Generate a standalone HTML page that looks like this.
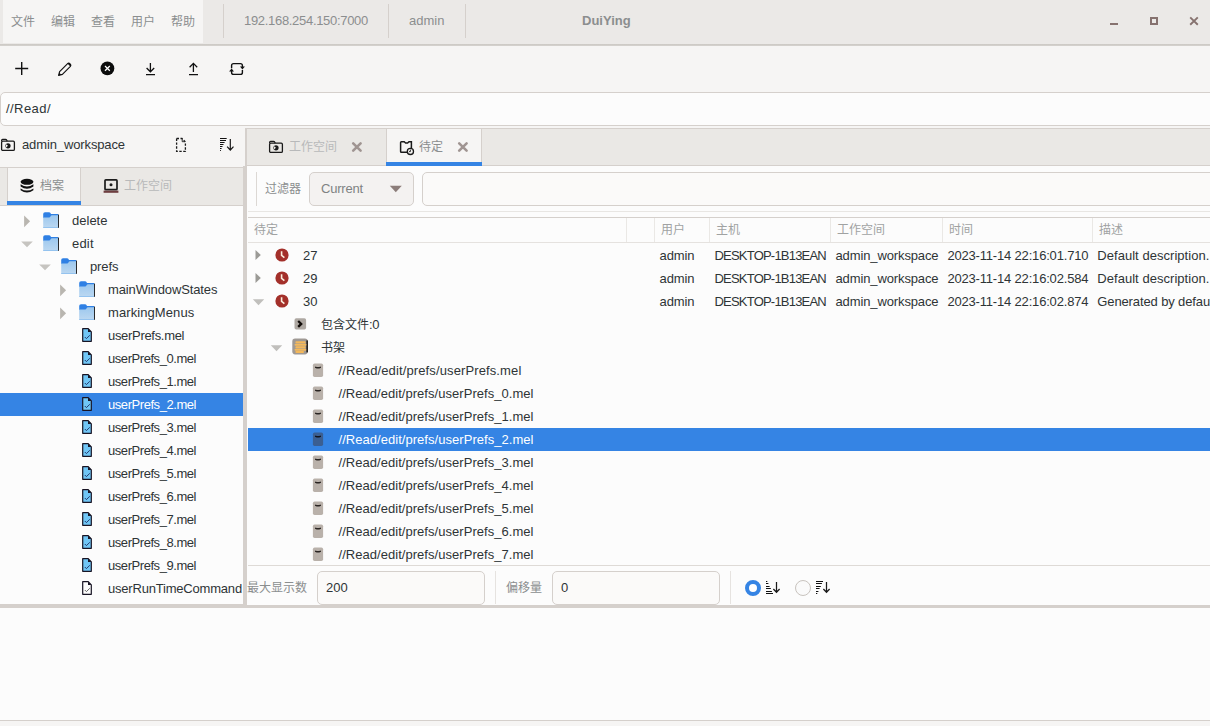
<!DOCTYPE html>
<html lang="zh">
<head>
<meta charset="utf-8">
<title>DuiYing</title>
<style>
*{box-sizing:border-box;margin:0;padding:0}
html,body{width:1210px;height:726px;overflow:hidden;background:#f6f5f4}
body{position:relative;font-family:"Liberation Sans","Noto Sans CJK SC",sans-serif;font-size:13px;color:#2e3436}
.a{position:absolute}
.t{position:absolute;white-space:nowrap;line-height:16px;height:16px}
.cj{font-size:12px}
.g{color:#8b8e8f}
.lg{color:#b8b9ba}
.hd{color:#a0a2a2}
.cj2{font-size:12px}
/* header */
#hdr{left:0;top:0;width:1210px;height:44px;background:#ebe9e7}
#hdrb{left:0;top:44px;width:1210px;height:2px;background:linear-gradient(#cbc8c3,#d6d3cf)}
#menubar{left:3px;top:0;width:200px;height:43px;background:#f6f5f4}
.vsep{width:1px;background:#d5d0cc}
/* toolbar */
#pathbar{left:0;top:92px;width:1225px;height:34px;background:#fcfcfc;border:1px solid #d5d0cc;border-radius:5px}
/* left */
#ltabs{left:0;top:167px;width:244px;height:39px;background:#eae8e5;border-top:1px solid #d5d0cc;border-bottom:1px solid #d5d0cc}
#ltab1{left:7px;top:168px;width:74px;height:37px;background:#f6f5f4;border-left:1px solid #d5d0cc;border-right:1px solid #d5d0cc}
#ltree{left:0;top:206px;width:243px;height:398px;background:#fcfcfc;overflow:hidden}
.row{position:absolute;left:0;height:23px;width:100%}
.sel{background:#3584e4;color:#fff}
#vsplit{left:243px;top:166px;width:4px;height:439px;background:#d5d0cc}
#vsplit2{left:245px;top:128px;width:2px;height:38px;background:#d5d0cc}
/* right */
#rtabs{left:247px;top:128px;width:963px;height:38px;background:#eae8e5;border-top:1px solid #d5d0cc;border-bottom:1px solid #d5d0cc}
#rtab2{left:386px;top:129px;width:96px;height:36px;background:#f6f5f4;border-left:1px solid #d5d0cc;border-right:1px solid #d5d0cc}
#rtable{left:248px;top:217px;width:962px;height:349px;background:#fcfcfc;border-top:1px solid #d5d0cc;overflow:hidden}
#hsplit{left:0;top:605px;width:1210px;height:3px;background:#d5d0cc}
#bottom{left:0;top:608px;width:1210px;height:112px;background:#fcfcfc}
#bstrip{left:0;top:720px;width:1210px;height:6px;background:#f6f5f4;border-top:1px solid #d5d0cc}
.entry{background:#fbfaf9;border:1px solid #d5d0cc;border-radius:5px}
</style>
</head>
<body>
<!-- HEADER -->
<div class="a" id="hdr"></div>
<div class="a" id="hdrb"></div>
<div class="a" id="menubar"></div>
<span class="t cj g" style="left:11px;top:14px">文件</span>
<span class="t cj g" style="left:51px;top:14px">编辑</span>
<span class="t cj g" style="left:91px;top:14px">查看</span>
<span class="t cj g" style="left:131px;top:14px">用户</span>
<span class="t cj g" style="left:171px;top:14px">帮助</span>
<div class="a vsep" style="left:223px;top:4px;height:34px"></div>
<span class="t g" id="ip" style="left:244px;top:13px;letter-spacing:-0.31px">192.168.254.150:7000</span>
<div class="a vsep" style="left:388px;top:4px;height:34px"></div>
<span class="t g" id="adm" style="left:409px;top:13px">admin</span>
<div class="a vsep" style="left:465px;top:4px;height:34px"></div>
<span class="t g" id="title" style="left:582px;top:13px;font-weight:bold">DuiYing</span>

<div class="a" style="left:1110px;top:22.5px;width:8px;height:2.6px;background:#86726f"></div>
<div class="a" style="left:1150px;top:17px;width:8px;height:8px;border:2px solid #86726f"></div>
<svg class="a" style="left:1189px;top:16px" width="10" height="10" viewBox="0 0 10 10"><path d="M1.2 1.4 L8.8 8.8 M8.8 1.4 L1.2 8.8" stroke="#86726f" stroke-width="1.9" fill="none"/></svg>

<!-- TOOLBAR -->
<svg class="a" style="left:14px;top:61px" width="16" height="16" viewBox="0 0 16 16"><path d="M7.7 1 V14 M1.2 7.5 H14.2" stroke="#111" stroke-width="1.4" fill="none"/></svg>
<svg class="a" style="left:57px;top:61px" width="16" height="16" viewBox="0 0 16 16"><path d="M1.6 14.4 L2.6 10.6 L10.6 2.6 Q11.6 1.7 12.7 2.7 L13.3 3.3 Q14.3 4.4 13.4 5.4 L5.4 13.4 Z" fill="none" stroke="#111" stroke-width="1.15" stroke-linejoin="round"/><path d="M10.4 2.6 L13.4 5.6 L14.3 3.7 L12.3 1.7 Z" fill="#111"/><path d="M1.4 14.6 L2.3 11.8 L4.2 13.7 Z" fill="#111"/></svg>
<svg class="a" style="left:100px;top:61px" width="15" height="15" viewBox="0 0 15 15"><circle cx="7.4" cy="7.4" r="6.9" fill="#0c0c0c"/><path d="M5 5 L9.8 9.8 M9.8 5 L5 9.8" stroke="#fff" stroke-width="1.25" fill="none"/></svg>
<svg class="a" style="left:143px;top:61px" width="16" height="16" viewBox="0 0 16 16"><path d="M7.4 2 V10.6 M3.6 7 L7.4 10.8 L11.2 7 M3 13.6 H12" stroke="#111" stroke-width="1.3" fill="none"/></svg>
<svg class="a" style="left:186px;top:61px" width="16" height="16" viewBox="0 0 16 16"><path d="M7.4 11 V2.6 M3.6 6.2 L7.4 2.4 L11.2 6.2 M3 13.6 H12" stroke="#111" stroke-width="1.3" fill="none"/></svg>
<svg class="a" style="left:228px;top:61px" width="18" height="16" viewBox="0 0 18 16"><path d="M3.6 7.2 V4.6 Q3.6 2.6 5.6 2.6 H12.4 Q14.4 2.6 14.4 4.6 V6 M14.4 9 V11.4 Q14.4 13.4 12.4 13.4 H5.6 Q3.6 13.4 3.6 11.4 V10" stroke="#111" stroke-width="1.4" fill="none"/><path d="M12 5.6 H16.9 L14.4 8.4 Z" fill="#111"/><path d="M1.1 10.4 H6 L3.6 7.6 Z" fill="#111"/></svg>
<div class="a" id="pathbar"></div>
<span class="t" id="path" style="left:6px;top:101px;letter-spacing:0.44px">//Read/</span>

<!-- LEFT PANEL -->
<svg class="a" style="left:0px;top:138px" width="16" height="14" viewBox="0 0 16 14"><path d="M1.6 3.2 V2.4 Q1.6 1.4 2.6 1.4 H5.6 Q6.4 1.4 6.8 2.2 L7.2 3.2" fill="none" stroke="#1a1a1a" stroke-width="1.2"/><rect x="1.6" y="3.2" width="12.8" height="9.2" rx="1.2" fill="none" stroke="#1a1a1a" stroke-width="1.3"/><circle cx="8" cy="7.8" r="2.6" fill="#1a1a1a"/><path d="M8 7.8 L6 6.2 V9.4 Z" fill="#f6f5f4"/></svg>
<svg class="a" style="left:175px;top:137px" width="12" height="16" viewBox="0 0 12 16"><path d="M1.6 1.5 H7 L10.4 4.9 V14.4 H1.6 Z" fill="none" stroke="#1a1a1a" stroke-width="1.3" stroke-dasharray="2.4 1.5"/><path d="M7.2 2 V4.7 H10" fill="none" stroke="#1a1a1a" stroke-width="0.9"/></svg>
<svg class="a" style="left:219px;top:137px" width="16" height="15" viewBox="0 0 16 15"><path d="M1 1.5 H7.7 M1 3.5 H7 M1 5.5 H5.6 M1 7.5 H4.5 M1 9.5 H3.5 M1 11.5 H2.6 M1 13.5 H1.9" stroke="#111" stroke-width="1" fill="none"/><path d="M11.3 2 V13 M8.1 9.6 L11.3 13 L14.5 9.6" stroke="#1a1a1a" stroke-width="1.2" fill="none"/></svg>
<span class="t" id="ws" style="left:22px;top:137px;letter-spacing:-0.12px">admin_workspace</span>
<div class="a" id="ltabs"></div>
<div class="a" id="ltab1"></div>
<div class="a" style="left:7px;top:201px;width:74px;height:4px;background:#3584e4"></div>
<svg class="a" style="left:20px;top:178px" width="14" height="16" viewBox="0 0 14 16"><ellipse cx="7" cy="3.8" rx="6.4" ry="3" fill="#111"/><path d="M0.6 6.2 Q7 10.6 13.4 6.2 V8.6 Q7 13 0.6 8.6 Z" fill="#111"/><path d="M0.6 10.4 Q7 14.8 13.4 10.4 V12.2 Q7 17 0.6 12.2 Z" fill="#111"/></svg>
<svg class="a" style="left:103px;top:178px" width="16" height="16" viewBox="0 0 16 16"><rect x="2" y="1.9" width="12" height="9.8" rx="0.8" fill="none" stroke="#1c1c1c" stroke-width="1.7"/><circle cx="8" cy="6.8" r="1.5" fill="#1c1c1c"/><rect x="0.6" y="12.6" width="14.8" height="2.2" fill="#6e3e40"/></svg>
<span class="t cj g" style="left:40px;top:178px">档案</span>
<span class="t cj lg" style="left:124px;top:178px">工作空间</span>
<div class="a" id="ltree">
<div class="row" style="top:3px"><svg class="a" style="left:22px;top:5px" width="10" height="15" viewBox="0 0 10 15"><path d="M2.1 1.4 L8.1 7.3 L2.1 13.2 Z" fill="#b9b6b0"/></svg><svg class="a" style="left:43px;top:3px" width="16" height="16" viewBox="0 0 16 16"><linearGradient id="fg0" x1="0" y1="0" x2="0" y2="1"><stop offset="0" stop-color="#9dc8ee"/><stop offset="1" stop-color="#bcd8f1"/></linearGradient><path d="M0.2 2 Q0.2 0.2 2 0.2 L6 0.2 Q7 0.2 7.5 1.1 L7.9 1.9 L15.2 1.9 L15.2 6 L0.2 6 Z" fill="#2f80e4"/><path d="M0.2 5.4 L6.2 5.4 Q6.9 5.4 7.3 4.7 L7.9 3.7 Q8.2 3.3 8.8 3.3 L15.2 3.3 L15.2 16 L0.2 16 Z" fill="url(#fg0)"/><rect x="0.2" y="15.3" width="15" height="0.7" fill="#84baee"/><rect x="15.1" y="2.6" width="0.9" height="13.2" fill="#141414"/></svg><span class="t" style="left:72px;top:4px;letter-spacing:0.01px">delete</span></div>
<div class="row" style="top:26px"><svg class="a" style="left:20px;top:7px" width="14" height="9" viewBox="0 0 14 9"><path d="M1.2 2.5 L12.8 2.5 L7 8.2 Z" fill="#c6c4c0"/></svg><svg class="a" style="left:43px;top:3px" width="16" height="16" viewBox="0 0 16 16"><linearGradient id="fg1" x1="0" y1="0" x2="0" y2="1"><stop offset="0" stop-color="#9dc8ee"/><stop offset="1" stop-color="#bcd8f1"/></linearGradient><path d="M0.2 2 Q0.2 0.2 2 0.2 L6 0.2 Q7 0.2 7.5 1.1 L7.9 1.9 L15.2 1.9 L15.2 6 L0.2 6 Z" fill="#2f80e4"/><path d="M0.2 5.4 L6.2 5.4 Q6.9 5.4 7.3 4.7 L7.9 3.7 Q8.2 3.3 8.8 3.3 L15.2 3.3 L15.2 16 L0.2 16 Z" fill="url(#fg1)"/><rect x="0.2" y="15.3" width="15" height="0.7" fill="#84baee"/><rect x="15.1" y="2.6" width="0.9" height="13.2" fill="#141414"/></svg><span class="t" style="left:72px;top:4px;letter-spacing:0.18px">edit</span></div>
<div class="row" style="top:49px"><svg class="a" style="left:38px;top:7px" width="14" height="9" viewBox="0 0 14 9"><path d="M1.2 2.5 L12.8 2.5 L7 8.2 Z" fill="#c6c4c0"/></svg><svg class="a" style="left:61px;top:3px" width="16" height="16" viewBox="0 0 16 16"><linearGradient id="fg2" x1="0" y1="0" x2="0" y2="1"><stop offset="0" stop-color="#9dc8ee"/><stop offset="1" stop-color="#bcd8f1"/></linearGradient><path d="M0.2 2 Q0.2 0.2 2 0.2 L6 0.2 Q7 0.2 7.5 1.1 L7.9 1.9 L15.2 1.9 L15.2 6 L0.2 6 Z" fill="#2f80e4"/><path d="M0.2 5.4 L6.2 5.4 Q6.9 5.4 7.3 4.7 L7.9 3.7 Q8.2 3.3 8.8 3.3 L15.2 3.3 L15.2 16 L0.2 16 Z" fill="url(#fg2)"/><rect x="0.2" y="15.3" width="15" height="0.7" fill="#84baee"/><rect x="15.1" y="2.6" width="0.9" height="13.2" fill="#141414"/></svg><span class="t" style="left:90px;top:4px;letter-spacing:-0.12px">prefs</span></div>
<div class="row" style="top:72px"><svg class="a" style="left:58px;top:5px" width="10" height="15" viewBox="0 0 10 15"><path d="M2.1 1.4 L8.1 7.3 L2.1 13.2 Z" fill="#b9b6b0"/></svg><svg class="a" style="left:79px;top:3px" width="16" height="16" viewBox="0 0 16 16"><linearGradient id="fg3" x1="0" y1="0" x2="0" y2="1"><stop offset="0" stop-color="#9dc8ee"/><stop offset="1" stop-color="#bcd8f1"/></linearGradient><path d="M0.2 2 Q0.2 0.2 2 0.2 L6 0.2 Q7 0.2 7.5 1.1 L7.9 1.9 L15.2 1.9 L15.2 6 L0.2 6 Z" fill="#2f80e4"/><path d="M0.2 5.4 L6.2 5.4 Q6.9 5.4 7.3 4.7 L7.9 3.7 Q8.2 3.3 8.8 3.3 L15.2 3.3 L15.2 16 L0.2 16 Z" fill="url(#fg3)"/><rect x="0.2" y="15.3" width="15" height="0.7" fill="#84baee"/><rect x="15.1" y="2.6" width="0.9" height="13.2" fill="#141414"/></svg><span class="t" style="left:108px;top:4px;letter-spacing:-0.12px">mainWindowStates</span></div>
<div class="row" style="top:95px"><svg class="a" style="left:58px;top:5px" width="10" height="15" viewBox="0 0 10 15"><path d="M2.1 1.4 L8.1 7.3 L2.1 13.2 Z" fill="#b9b6b0"/></svg><svg class="a" style="left:79px;top:3px" width="16" height="16" viewBox="0 0 16 16"><linearGradient id="fg4" x1="0" y1="0" x2="0" y2="1"><stop offset="0" stop-color="#9dc8ee"/><stop offset="1" stop-color="#bcd8f1"/></linearGradient><path d="M0.2 2 Q0.2 0.2 2 0.2 L6 0.2 Q7 0.2 7.5 1.1 L7.9 1.9 L15.2 1.9 L15.2 6 L0.2 6 Z" fill="#2f80e4"/><path d="M0.2 5.4 L6.2 5.4 Q6.9 5.4 7.3 4.7 L7.9 3.7 Q8.2 3.3 8.8 3.3 L15.2 3.3 L15.2 16 L0.2 16 Z" fill="url(#fg4)"/><rect x="0.2" y="15.3" width="15" height="0.7" fill="#84baee"/><rect x="15.1" y="2.6" width="0.9" height="13.2" fill="#141414"/></svg><span class="t" style="left:108px;top:4px;letter-spacing:0.09px">markingMenus</span></div>
<div class="row" style="top:118px"><svg class="a" style="left:82px;top:4px" width="10" height="14" viewBox="0 0 10 14"><path d="M0.7 0.7 L6.2 0.7 L9.3 3.8 L9.3 13.3 L0.7 13.3 Z" fill="#70c6f6" stroke="#181424" stroke-width="1.2" stroke-linejoin="round"/><path d="M6 0.6 L6 4 L9.4 4 Z" fill="#181424"/><path d="M2.8 9 L4.4 10.6 L7.8 7.3" fill="none" stroke="#1c2c60" stroke-width="0.9"/></svg><span class="t" style="left:108px;top:4px;letter-spacing:-0.31px">userPrefs.mel</span></div>
<div class="row" style="top:141px"><svg class="a" style="left:82px;top:4px" width="10" height="14" viewBox="0 0 10 14"><path d="M0.7 0.7 L6.2 0.7 L9.3 3.8 L9.3 13.3 L0.7 13.3 Z" fill="#70c6f6" stroke="#181424" stroke-width="1.2" stroke-linejoin="round"/><path d="M6 0.6 L6 4 L9.4 4 Z" fill="#181424"/><path d="M2.8 9 L4.4 10.6 L7.8 7.3" fill="none" stroke="#1c2c60" stroke-width="0.9"/></svg><span class="t" style="left:108px;top:4px;letter-spacing:-0.44px">userPrefs_0.mel</span></div>
<div class="row" style="top:164px"><svg class="a" style="left:82px;top:4px" width="10" height="14" viewBox="0 0 10 14"><path d="M0.7 0.7 L6.2 0.7 L9.3 3.8 L9.3 13.3 L0.7 13.3 Z" fill="#70c6f6" stroke="#181424" stroke-width="1.2" stroke-linejoin="round"/><path d="M6 0.6 L6 4 L9.4 4 Z" fill="#181424"/><path d="M2.8 9 L4.4 10.6 L7.8 7.3" fill="none" stroke="#1c2c60" stroke-width="0.9"/></svg><span class="t" style="left:108px;top:4px;letter-spacing:-0.44px">userPrefs_1.mel</span></div>
<div class="row sel" style="top:187px"><svg class="a" style="left:82px;top:4px" width="10" height="14" viewBox="0 0 10 14"><path d="M0.7 0.7 L6.2 0.7 L9.3 3.8 L9.3 13.3 L0.7 13.3 Z" fill="#70c6f6" stroke="#181424" stroke-width="1.2" stroke-linejoin="round"/><path d="M6 0.6 L6 4 L9.4 4 Z" fill="#181424"/><path d="M2.8 9 L4.4 10.6 L7.8 7.3" fill="none" stroke="#1c2c60" stroke-width="0.9"/></svg><span class="t" style="left:108px;top:4px;letter-spacing:-0.44px">userPrefs_2.mel</span></div>
<div class="row" style="top:210px"><svg class="a" style="left:82px;top:4px" width="10" height="14" viewBox="0 0 10 14"><path d="M0.7 0.7 L6.2 0.7 L9.3 3.8 L9.3 13.3 L0.7 13.3 Z" fill="#70c6f6" stroke="#181424" stroke-width="1.2" stroke-linejoin="round"/><path d="M6 0.6 L6 4 L9.4 4 Z" fill="#181424"/><path d="M2.8 9 L4.4 10.6 L7.8 7.3" fill="none" stroke="#1c2c60" stroke-width="0.9"/></svg><span class="t" style="left:108px;top:4px;letter-spacing:-0.44px">userPrefs_3.mel</span></div>
<div class="row" style="top:233px"><svg class="a" style="left:82px;top:4px" width="10" height="14" viewBox="0 0 10 14"><path d="M0.7 0.7 L6.2 0.7 L9.3 3.8 L9.3 13.3 L0.7 13.3 Z" fill="#70c6f6" stroke="#181424" stroke-width="1.2" stroke-linejoin="round"/><path d="M6 0.6 L6 4 L9.4 4 Z" fill="#181424"/><path d="M2.8 9 L4.4 10.6 L7.8 7.3" fill="none" stroke="#1c2c60" stroke-width="0.9"/></svg><span class="t" style="left:108px;top:4px;letter-spacing:-0.44px">userPrefs_4.mel</span></div>
<div class="row" style="top:256px"><svg class="a" style="left:82px;top:4px" width="10" height="14" viewBox="0 0 10 14"><path d="M0.7 0.7 L6.2 0.7 L9.3 3.8 L9.3 13.3 L0.7 13.3 Z" fill="#70c6f6" stroke="#181424" stroke-width="1.2" stroke-linejoin="round"/><path d="M6 0.6 L6 4 L9.4 4 Z" fill="#181424"/><path d="M2.8 9 L4.4 10.6 L7.8 7.3" fill="none" stroke="#1c2c60" stroke-width="0.9"/></svg><span class="t" style="left:108px;top:4px;letter-spacing:-0.44px">userPrefs_5.mel</span></div>
<div class="row" style="top:279px"><svg class="a" style="left:82px;top:4px" width="10" height="14" viewBox="0 0 10 14"><path d="M0.7 0.7 L6.2 0.7 L9.3 3.8 L9.3 13.3 L0.7 13.3 Z" fill="#70c6f6" stroke="#181424" stroke-width="1.2" stroke-linejoin="round"/><path d="M6 0.6 L6 4 L9.4 4 Z" fill="#181424"/><path d="M2.8 9 L4.4 10.6 L7.8 7.3" fill="none" stroke="#1c2c60" stroke-width="0.9"/></svg><span class="t" style="left:108px;top:4px;letter-spacing:-0.44px">userPrefs_6.mel</span></div>
<div class="row" style="top:302px"><svg class="a" style="left:82px;top:4px" width="10" height="14" viewBox="0 0 10 14"><path d="M0.7 0.7 L6.2 0.7 L9.3 3.8 L9.3 13.3 L0.7 13.3 Z" fill="#70c6f6" stroke="#181424" stroke-width="1.2" stroke-linejoin="round"/><path d="M6 0.6 L6 4 L9.4 4 Z" fill="#181424"/><path d="M2.8 9 L4.4 10.6 L7.8 7.3" fill="none" stroke="#1c2c60" stroke-width="0.9"/></svg><span class="t" style="left:108px;top:4px;letter-spacing:-0.44px">userPrefs_7.mel</span></div>
<div class="row" style="top:325px"><svg class="a" style="left:82px;top:4px" width="10" height="14" viewBox="0 0 10 14"><path d="M0.7 0.7 L6.2 0.7 L9.3 3.8 L9.3 13.3 L0.7 13.3 Z" fill="#70c6f6" stroke="#181424" stroke-width="1.2" stroke-linejoin="round"/><path d="M6 0.6 L6 4 L9.4 4 Z" fill="#181424"/><path d="M2.8 9 L4.4 10.6 L7.8 7.3" fill="none" stroke="#1c2c60" stroke-width="0.9"/></svg><span class="t" style="left:108px;top:4px;letter-spacing:-0.44px">userPrefs_8.mel</span></div>
<div class="row" style="top:348px"><svg class="a" style="left:82px;top:4px" width="10" height="14" viewBox="0 0 10 14"><path d="M0.7 0.7 L6.2 0.7 L9.3 3.8 L9.3 13.3 L0.7 13.3 Z" fill="#70c6f6" stroke="#181424" stroke-width="1.2" stroke-linejoin="round"/><path d="M6 0.6 L6 4 L9.4 4 Z" fill="#181424"/><path d="M2.8 9 L4.4 10.6 L7.8 7.3" fill="none" stroke="#1c2c60" stroke-width="0.9"/></svg><span class="t" style="left:108px;top:4px;letter-spacing:-0.44px">userPrefs_9.mel</span></div>
<div class="row" style="top:371px"><svg class="a" style="left:82px;top:4px" width="10" height="14" viewBox="0 0 10 14"><path d="M0.7 0.7 L6.2 0.7 L9.3 3.8 L9.3 13.3 L0.7 13.3 Z" fill="#fdfdfd" stroke="#181424" stroke-width="1.2" stroke-linejoin="round"/><path d="M6 0.6 L6 4 L9.4 4 Z" fill="#181424"/><path d="M2.8 9 L4.4 10.6 L7.8 7.3" fill="none" stroke="#555" stroke-width="0.9"/></svg><span class="t" style="left:108px;top:4px;letter-spacing:-0.2px">userRunTimeCommand</span></div>
</div>
<div class="a" id="vsplit"></div>
<div class="a" id="vsplit2"></div>

<!-- RIGHT PANEL -->
<div class="a" id="rtabs"></div>
<div class="a" id="rtab2"></div>
<div class="a" style="left:386px;top:162px;width:96px;height:4px;background:#3584e4"></div>
<svg class="a" style="left:268px;top:140px" width="16" height="14" viewBox="0 0 16 14"><path d="M1.6 3.2 V2.4 Q1.6 1.4 2.6 1.4 H5.6 Q6.4 1.4 6.8 2.2 L7.2 3.2" fill="none" stroke="#1a1a1a" stroke-width="1.2"/><rect x="1.6" y="3.2" width="12.8" height="9.2" rx="1.2" fill="none" stroke="#1a1a1a" stroke-width="1.3"/><circle cx="8" cy="7.8" r="2.6" fill="#1a1a1a"/><path d="M8 7.8 L6 6.2 V9.4 Z" fill="#ebe9e7"/></svg>
<svg class="a" style="left:351px;top:141px" width="12" height="12" viewBox="0 0 12 12"><path d="M2.2 2.4 L9.6 9.6 M9.6 2.4 L2.2 9.6" stroke="#a09592" stroke-width="2.6" stroke-linecap="round" fill="none"/></svg>
<svg class="a" style="left:399px;top:140px" width="16" height="16" viewBox="0 0 16 16"><path d="M8.4 12.2 H2.4 Q1.6 12.2 1.6 11.4 V2.6 Q1.6 1.8 2.4 1.8 H5.2 L6.6 3 H8.6 L10 1.8 H12.4 V8.4" fill="none" stroke="#1a1a1a" stroke-width="1.5"/><circle cx="11.4" cy="11.4" r="3.1" fill="#f6f5f4" stroke="#1a1a1a" stroke-width="1.3"/><path d="M11.4 9.6 V11.6 H10" fill="none" stroke="#1a1a1a" stroke-width="0.9"/></svg>
<svg class="a" style="left:457px;top:141px" width="12" height="12" viewBox="0 0 12 12"><path d="M2.2 2.4 L9.6 9.6 M9.6 2.4 L2.2 9.6" stroke="#a09592" stroke-width="2.6" stroke-linecap="round" fill="none"/></svg>
<span class="t cj lg" style="left:289px;top:139px">工作空间</span>
<span class="t cj g" style="left:419px;top:139px">待定</span>
<div class="a" style="left:247px;top:166px;width:963px;height:439px;background:#fcfcfc"></div>
<div class="a vsep" style="left:256px;top:172px;height:34px;background:#dcd8d4"></div>
<span class="t cj g" style="left:265px;top:181px">过滤器</span>
<div class="a" style="left:309px;top:172px;width:105px;height:34px;background:#f4f2f1;border:1px solid #d5d0cc;border-radius:5px"></div>
<span class="t g" id="cur" style="left:321px;top:181px;letter-spacing:-0.2px;color:#7f8283">Current</span>
<svg class="a" style="left:389px;top:185px" width="14" height="8" viewBox="0 0 14 8"><path d="M0.8 0.8 H12.8 L6.8 7.2 Z" fill="#8c7d7a"/></svg>
<div class="a entry" style="left:422px;top:172px;width:800px;height:34px"></div>
<div class="a" style="left:248px;top:211px;width:962px;height:1px;background:#e8e6e3"></div>
<div class="a" id="rtable">
<div class="a" style="left:0;top:0;width:962px;height:25px;background:#fcfcfc;border-bottom:1px solid #e5e2df"></div>
<div class="a" style="left:378px;top:0;width:1px;height:24px;background:#eae8e5"></div>
<div class="a" style="left:406px;top:0;width:1px;height:24px;background:#eae8e5"></div>
<div class="a" style="left:461px;top:0;width:1px;height:24px;background:#eae8e5"></div>
<div class="a" style="left:582px;top:0;width:1px;height:24px;background:#eae8e5"></div>
<div class="a" style="left:694px;top:0;width:1px;height:24px;background:#eae8e5"></div>
<div class="a" style="left:844px;top:0;width:1px;height:24px;background:#eae8e5"></div>
<span class="t cj hd" style="left:6px;top:4px">待定</span>
<span class="t cj hd" style="left:413px;top:4px">用户</span>
<span class="t cj hd" style="left:468px;top:4px">主机</span>
<span class="t cj hd" style="left:589px;top:4px">工作空间</span>
<span class="t cj hd" style="left:701px;top:4px">时间</span>
<span class="t cj hd" style="left:851px;top:4px">描述</span>
<div class="row" style="top:26px"><svg class="a" style="left:6px;top:5px" width="8" height="12" viewBox="0 0 8 12"><path d="M1.5 1 L6.8 6 L1.5 11 Z" fill="#9b9a96"/></svg><svg class="a" style="left:27px;top:4px" width="14" height="14" viewBox="0 0 14 14"><circle cx="7" cy="7" r="6.6" fill="#a3302a"/><path d="M6.6 3.2 V7.4 L9.4 9.6" stroke="#fbeedd" stroke-width="1.6" fill="none"/></svg><span class="t" style="left:55px;top:4px">27</span><span class="t" style="left:411.5px;top:4px;letter-spacing:-0.08px">admin</span><span class="t" style="left:466.5px;top:4px;letter-spacing:-0.79px">DESKTOP-1B13EAN</span><span class="t" style="left:587.5px;top:4px;letter-spacing:-0.12px">admin_workspace</span><span class="t" style="left:699.4px;top:4px;letter-spacing:-0.18px">2023-11-14 22:16:01.710</span><span class="t" style="left:849.3px;top:4px;letter-spacing:0.04px">Default description.</span></div>
<div class="row" style="top:49px"><svg class="a" style="left:6px;top:5px" width="8" height="12" viewBox="0 0 8 12"><path d="M1.5 1 L6.8 6 L1.5 11 Z" fill="#9b9a96"/></svg><svg class="a" style="left:27px;top:4px" width="14" height="14" viewBox="0 0 14 14"><circle cx="7" cy="7" r="6.6" fill="#a3302a"/><path d="M6.6 3.2 V7.4 L9.4 9.6" stroke="#fbeedd" stroke-width="1.6" fill="none"/></svg><span class="t" style="left:55px;top:4px">29</span><span class="t" style="left:411.5px;top:4px;letter-spacing:-0.08px">admin</span><span class="t" style="left:466.5px;top:4px;letter-spacing:-0.79px">DESKTOP-1B13EAN</span><span class="t" style="left:587.5px;top:4px;letter-spacing:-0.12px">admin_workspace</span><span class="t" style="left:699.4px;top:4px;letter-spacing:-0.18px">2023-11-14 22:16:02.584</span><span class="t" style="left:849.3px;top:4px;letter-spacing:0.04px">Default description.</span></div>
<div class="row" style="top:72px"><svg class="a" style="left:4px;top:8px" width="13" height="8" viewBox="0 0 13 8"><path d="M0.8 1.2 L12.2 1.2 L6.5 7.2 Z" fill="#c0bfbc"/></svg><svg class="a" style="left:27px;top:4px" width="14" height="14" viewBox="0 0 14 14"><circle cx="7" cy="7" r="6.6" fill="#a3302a"/><path d="M6.6 3.2 V7.4 L9.4 9.6" stroke="#fbeedd" stroke-width="1.6" fill="none"/></svg><span class="t" style="left:55px;top:4px">30</span><span class="t" style="left:411.5px;top:4px;letter-spacing:-0.08px">admin</span><span class="t" style="left:466.5px;top:4px;letter-spacing:-0.79px">DESKTOP-1B13EAN</span><span class="t" style="left:587.5px;top:4px;letter-spacing:-0.12px">admin_workspace</span><span class="t" style="left:699.4px;top:4px;letter-spacing:-0.18px">2023-11-14 22:16:02.874</span><span class="t" style="left:849.3px;top:4px;letter-spacing:-0.12px">Generated by default</span></div>
<div class="row" style="top:95px"><svg class="a" style="left:46px;top:5px" width="13" height="12" viewBox="0 0 13 12"><rect x="0.5" y="0.3" width="11.6" height="11.2" rx="1.8" fill="#aea8a2"/><path d="M4.2 3 L7.2 5.9 L4.2 8.8" stroke="#120d0a" stroke-width="2.3" fill="none"/></svg><span class="t" style="left:73px;top:4px"><span class="cj2">包含文件</span><span style="letter-spacing:-0.4px">:0</span></span></div>
<div class="row" style="top:118px"><svg class="a" style="left:22px;top:8px" width="13" height="8" viewBox="0 0 13 8"><path d="M0.8 1.2 L12.2 1.2 L6.5 7.2 Z" fill="#c0bfbc"/></svg><svg class="a" style="left:44px;top:2px" width="17" height="17" viewBox="0 0 17 17"><rect x="0.3" y="0.6" width="15.4" height="15.8" rx="2.8" fill="#9f9994"/><rect x="14.4" y="2.4" width="1.5" height="12" fill="#1a1613"/><path d="M4.4 4.2 H12.6 M3.6 6.7 H13.4 M4.4 9.2 H12.6 M3.6 11.7 H13.2 M4.4 14 H11" stroke="#f4b85a" stroke-width="2.1" stroke-linecap="round" fill="none"/></svg><span class="t cj2" style="left:73px;top:4px">书架</span></div>
<div class="row" style="top:141px"><svg class="a" style="left:64px;top:4px" width="12" height="15" viewBox="0 0 12 15"><rect x="0.9" y="0.5" width="10.2" height="13.4" rx="1.7" fill="#b9b1aa"/><path d="M3.7 4.4 Q6 5.3 8.3 4.4" stroke="#2a2522" stroke-width="1.5" stroke-linecap="round" fill="none"/></svg><span class="t" style="left:90.5px;top:4px;letter-spacing:0.12px">//Read/edit/prefs/userPrefs.mel</span></div>
<div class="row" style="top:164px"><svg class="a" style="left:64px;top:4px" width="12" height="15" viewBox="0 0 12 15"><rect x="0.9" y="0.5" width="10.2" height="13.4" rx="1.7" fill="#b9b1aa"/><path d="M3.7 4.4 Q6 5.3 8.3 4.4" stroke="#2a2522" stroke-width="1.5" stroke-linecap="round" fill="none"/></svg><span class="t" style="left:90.5px;top:4px;letter-spacing:0.04px">//Read/edit/prefs/userPrefs_0.mel</span></div>
<div class="row" style="top:187px"><svg class="a" style="left:64px;top:4px" width="12" height="15" viewBox="0 0 12 15"><rect x="0.9" y="0.5" width="10.2" height="13.4" rx="1.7" fill="#b9b1aa"/><path d="M3.7 4.4 Q6 5.3 8.3 4.4" stroke="#2a2522" stroke-width="1.5" stroke-linecap="round" fill="none"/></svg><span class="t" style="left:90.5px;top:4px;letter-spacing:0.04px">//Read/edit/prefs/userPrefs_1.mel</span></div>
<div class="row sel" style="top:210px"><svg class="a" style="left:64px;top:4px" width="12" height="15" viewBox="0 0 12 15"><rect x="0.9" y="0.5" width="10.2" height="13.4" rx="1.7" fill="#3b5f92"/><path d="M3.7 4.4 Q6 5.3 8.3 4.4" stroke="#10131c" stroke-width="1.5" stroke-linecap="round" fill="none"/></svg><span class="t" style="left:90.5px;top:4px;letter-spacing:0.04px">//Read/edit/prefs/userPrefs_2.mel</span></div>
<div class="row" style="top:233px"><svg class="a" style="left:64px;top:4px" width="12" height="15" viewBox="0 0 12 15"><rect x="0.9" y="0.5" width="10.2" height="13.4" rx="1.7" fill="#b9b1aa"/><path d="M3.7 4.4 Q6 5.3 8.3 4.4" stroke="#2a2522" stroke-width="1.5" stroke-linecap="round" fill="none"/></svg><span class="t" style="left:90.5px;top:4px;letter-spacing:0.04px">//Read/edit/prefs/userPrefs_3.mel</span></div>
<div class="row" style="top:256px"><svg class="a" style="left:64px;top:4px" width="12" height="15" viewBox="0 0 12 15"><rect x="0.9" y="0.5" width="10.2" height="13.4" rx="1.7" fill="#b9b1aa"/><path d="M3.7 4.4 Q6 5.3 8.3 4.4" stroke="#2a2522" stroke-width="1.5" stroke-linecap="round" fill="none"/></svg><span class="t" style="left:90.5px;top:4px;letter-spacing:0.04px">//Read/edit/prefs/userPrefs_4.mel</span></div>
<div class="row" style="top:279px"><svg class="a" style="left:64px;top:4px" width="12" height="15" viewBox="0 0 12 15"><rect x="0.9" y="0.5" width="10.2" height="13.4" rx="1.7" fill="#b9b1aa"/><path d="M3.7 4.4 Q6 5.3 8.3 4.4" stroke="#2a2522" stroke-width="1.5" stroke-linecap="round" fill="none"/></svg><span class="t" style="left:90.5px;top:4px;letter-spacing:0.04px">//Read/edit/prefs/userPrefs_5.mel</span></div>
<div class="row" style="top:302px"><svg class="a" style="left:64px;top:4px" width="12" height="15" viewBox="0 0 12 15"><rect x="0.9" y="0.5" width="10.2" height="13.4" rx="1.7" fill="#b9b1aa"/><path d="M3.7 4.4 Q6 5.3 8.3 4.4" stroke="#2a2522" stroke-width="1.5" stroke-linecap="round" fill="none"/></svg><span class="t" style="left:90.5px;top:4px;letter-spacing:0.04px">//Read/edit/prefs/userPrefs_6.mel</span></div>
<div class="row" style="top:325px"><svg class="a" style="left:64px;top:4px" width="12" height="15" viewBox="0 0 12 15"><rect x="0.9" y="0.5" width="10.2" height="13.4" rx="1.7" fill="#b9b1aa"/><path d="M3.7 4.4 Q6 5.3 8.3 4.4" stroke="#2a2522" stroke-width="1.5" stroke-linecap="round" fill="none"/></svg><span class="t" style="left:90.5px;top:4px;letter-spacing:0.04px">//Read/edit/prefs/userPrefs_7.mel</span></div>
</div>

<!-- BOTTOM -->
<div class="a" style="left:248px;top:565px;width:962px;height:1px;background:#dedad6"></div>
<span class="t cj g" style="left:247px;top:580px">最大显示数</span>
<div class="a entry" style="left:317px;top:571px;width:168px;height:34px"></div>
<span class="t" id="v200" style="left:326px;top:580px">200</span>
<div class="a vsep" style="left:495px;top:571px;height:33px;background:#e6e3e0"></div>
<span class="t cj g" style="left:506px;top:580px">偏移量</span>
<div class="a entry" style="left:552px;top:571px;width:168px;height:34px"></div>
<span class="t" id="v0" style="left:561px;top:580px">0</span>
<div class="a vsep" style="left:730px;top:571px;height:33px;background:#e6e3e0"></div>
<div class="a" style="left:745px;top:580px;width:16px;height:16px;border-radius:50%;background:#fff;border:4.2px solid #3584e4"></div>
<svg class="a" style="left:765px;top:580px" width="16" height="15" viewBox="0 0 16 15"><path d="M1 1.5 H2.3 M1 3.5 H3.4 M1 6.5 H4.6 M1 8.5 H5.8 M1 11.5 H6.9 M1 13.5 H8" stroke="#111" stroke-width="1.1" fill="none"/><path d="M11.5 2 V12.2 M8.4 9 L11.5 12.3 L14.6 9" stroke="#1a1a1a" stroke-width="1.25" fill="none"/></svg>
<div class="a" style="left:795px;top:580px;width:16px;height:16px;border-radius:50%;background:#fafafa;border:1px solid #c8c3be"></div>
<svg class="a" style="left:815px;top:580px" width="16" height="15" viewBox="0 0 16 15"><path d="M1 1.5 H8 M1 3.5 H6.9 M1 6.5 H5.8 M1 8.5 H4.6 M1 11.5 H3.4 M1 13.5 H2.3" stroke="#111" stroke-width="1.1" fill="none"/><path d="M11.5 2 V12.2 M8.4 9 L11.5 12.3 L14.6 9" stroke="#1a1a1a" stroke-width="1.25" fill="none"/></svg>
<div class="a" id="hsplit"></div>
<div class="a" style="left:0;top:604px;width:243px;height:1px;background:#d5d0cc"></div>
<div class="a" id="bottom"></div>
<div class="a" id="bstrip"></div>
</body>
</html>
